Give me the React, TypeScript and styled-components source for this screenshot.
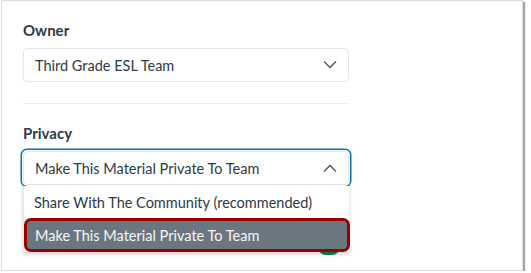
import React from 'react'
import styled, { createGlobalStyle } from 'styled-components'

const GlobalStyle = createGlobalStyle`
  html, body {
    margin: 0;
    padding: 0;
    background: #ffffff;
    font-family: Lato, 'Liberation Sans', sans-serif;
  }
`

const Frame = styled.div`
  box-sizing: border-box;
  width: 522px;
  height: 271px;
  margin-left: 1px;
  border: 1px solid #dcdcdc;
  box-shadow: 2px 2px 1px rgba(0, 0, 0, 0.35);
  background: #ffffff;
  padding: 19px 0 0 21px;
  overflow: hidden;
`

const Form = styled.div`
  width: 326px;
  display: flex;
  flex-direction: column;
`

const Label = styled.div`
  font-size: 15px;
  font-weight: 700;
  line-height: 20px;
  color: #2d3b45;
  margin-bottom: 8px;
`

const SelectWrap = styled.div`
  position: relative;
`

const SelectBox = styled.div<{ focused?: boolean }>`
  box-sizing: border-box;
  height: 34px;
  display: flex;
  align-items: center;
  justify-content: space-between;
  padding: 0 11px 0 11px;
  border: 1px solid #e4e6e8;
  border-radius: 4px;
  font-size: 14.5px;
  color: #2d3b45;
  background: #ffffff;
  box-shadow: ${p => (p.focused ? '0 0 0 1px #ffffff, 0 0 0 2.5px #0374b5' : 'none')};
`

const Divider = styled.div`
  height: 1px;
  background: #eceeef;
  margin: 21px 0 19px;
`

const Menu = styled.div`
  position: absolute;
  top: 35px;
  left: 0;
  right: 0;
  background: #ffffff;
  border-left: 1px solid #e4e6e8;
  box-shadow: 0 2px 4px rgba(0, 0, 0, 0.18);
  z-index: 2;
`

const Option = styled.div<{ active?: boolean }>`
  box-sizing: border-box;
  height: ${p => (p.active ? '34px' : '32px')};
  display: flex;
  align-items: center;
  padding-left: ${p => (p.active ? '8px' : '10px')};
  font-size: 14.5px;
  color: ${p => (p.active ? '#f5f6f7' : '#2d3b45')};
  background: ${p => (p.active ? '#6b7780' : '#ffffff')};
  border: ${p => (p.active ? '3px solid #990000' : 'none')};
  border-radius: ${p => (p.active ? '7px' : '0')};
  margin-right: ${p => (p.active ? '-1px' : '0')};
`

const Below = styled.div`
  height: 80px;
  display: flex;
  justify-content: flex-end;
  padding: 54px 9px 0 0;
  box-sizing: border-box;
`

const Toggle = styled.div`
  width: 22px;
  height: 16px;
  border-radius: 8px;
  background: #0b874b;
`

const Chevron = ({ up }: { up?: boolean }) => (
  <svg width="14" height="8" viewBox="0 0 14 8" fill="none">
    <path
      d={up ? 'M1 7.5 L7 1.5 L13 7.5' : 'M1 0.5 L7 6.5 L13 0.5'}
      stroke="#4a5661"
      strokeWidth="1.3"
    />
  </svg>
)

export default function App() {
  return (
    <>
      <GlobalStyle />
      <Frame>
        <Form>
          <Label>Owner</Label>
          <SelectBox>
            <span>Third Grade ESL Team</span>
            <Chevron />
          </SelectBox>
          <Divider />
          <Label>Privacy</Label>
          <SelectWrap>
            <SelectBox focused>
              <span>Make This Material Private To Team</span>
              <Chevron up />
            </SelectBox>
            <Menu>
              <Option>Share With The Community (recommended)</Option>
              <Option active>Make This Material Private To Team</Option>
            </Menu>
            <Below>
              <Toggle />
            </Below>
          </SelectWrap>
        </Form>
      </Frame>
    </>
  )
}
